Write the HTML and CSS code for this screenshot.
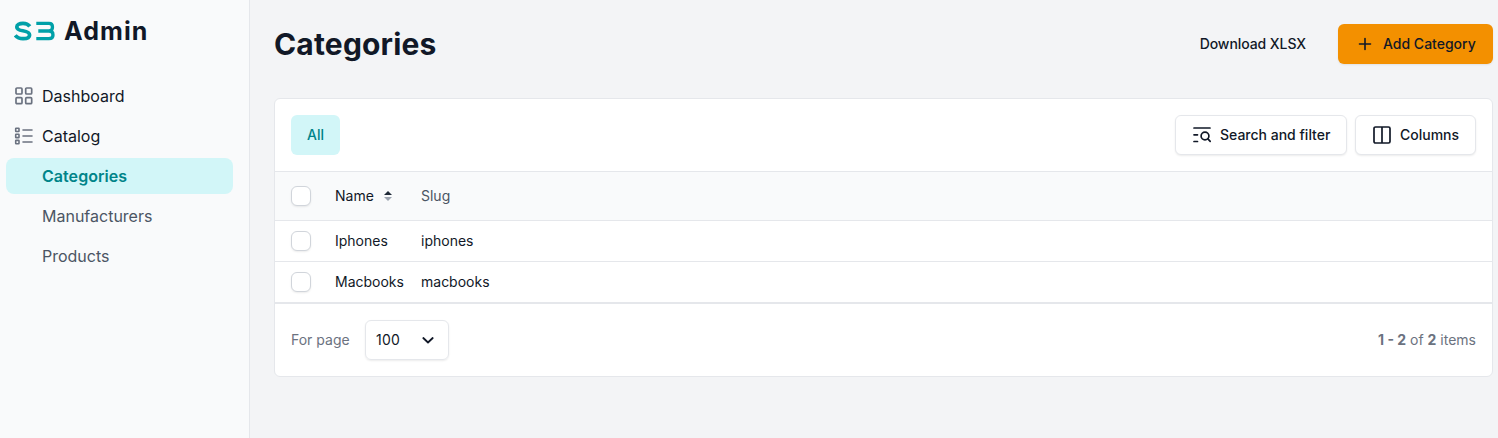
FILE: index.html
```html
<!DOCTYPE html>
<html lang="en">
<head>
<meta charset="utf-8">
<title>Categories</title>
<link rel="stylesheet" href="styles.css">
</head>
<body>
<div class="app">
  <aside class="sidebar">
    <div class="brand">
      <svg class="brand-mark" width="42" height="20" viewBox="0 0 42 20" fill="none" stroke="currentColor" stroke-width="3.700">
        <path d="M15.800 5.400C14.300 3.300 12.300 2.300 9 2.300 5.300 2.300 2.800 3.600 2.800 5.900c0 2.300 2.100 3.200 6.100 3.900 4.500.8 6.700 1.700 6.700 4.100 0 2.500-2.600 3.800-6.600 3.800-3.600 0-6.200-1.200-7.800-3.300"/>
        <path d="M22.300 2.300H35Q38.500 2.300 38.500 6Q38.500 10 35 10H24.300M35 10Q39 10 39 13.900Q39 17.700 35 17.700H22.300" stroke-width="3.300"/>
      </svg>
      <span class="brand-name">Admin</span>
    </div>
    <nav class="nav">
      <a class="nav-item">
        <svg class="nav-icon" width="20" height="20" viewBox="0 0 20 20" fill="none" stroke="currentColor" stroke-width="1.700"><rect x="2" y="2" width="6" height="6" rx="1"/><rect x="11.700" y="2" width="6" height="6" rx="1"/><rect x="2" y="11.700" width="6" height="6" rx="1"/><rect x="11.700" y="11.700" width="6" height="6" rx="1"/></svg>
        Dashboard
      </a>
      <a class="nav-item">
        <svg class="nav-icon" width="20" height="20" viewBox="0 0 20 20" fill="none" stroke="currentColor" stroke-width="1.600" stroke-linecap="round"><rect x="1.700" y="2.200" width="3.300" height="3.300" rx=".4"/><rect x="1.700" y="8.300" width="3.300" height="3.300" rx=".4"/><rect x="1.700" y="14.400" width="3.300" height="3.300" rx=".4"/><path d="M9 4h9M9 10h9M9 16h9"/></svg>
        Catalog
      </a>
      <a class="nav-item nav-child active">Categories</a>
      <a class="nav-item nav-child">Manufacturers</a>
      <a class="nav-item nav-child">Products</a>
    </nav>
  </aside>
  <main class="main">
    <header class="page-header">
      <h1 class="title">Categories</h1>
      <div class="actions">
        <a class="link-btn">Download XLSX</a>
        <button class="btn btn-primary"><svg width="20" height="20" viewBox="0 0 20 20" fill="none" stroke="currentColor" stroke-width="1.600" stroke-linecap="round"><path d="M10 4.500v11M4.500 10h11"/></svg>Add Category</button>
      </div>
    </header>
    <section class="card">
      <div class="toolbar">
        <button class="tab">All</button>
        <div class="tools">
          <button class="btn btn-filter"><svg width="20" height="20" viewBox="0 0 20 20" fill="none" stroke="currentColor" stroke-width="1.700" stroke-linecap="round"><path d="M2 3h16M2 9.800h3.500M2 16.500h3.500"/><circle cx="13" cy="11" r="3.900"/><path d="M15.900 13.900L18.200 16.300"/></svg>Search and filter</button>
          <button class="btn btn-columns"><svg width="20" height="20" viewBox="0 0 20 20" fill="none" stroke="currentColor" stroke-width="1.700"><rect x="2" y="2" width="16" height="16" rx="1.500"/><path d="M10 2v16"/></svg>Columns</button>
        </div>
      </div>
      <div class="row head">
        <span class="check"></span>
        <span class="cell name">Name<svg class="sort" width="8" height="10" viewBox="0 0 8 10"><path class="sort-up" d="M0 4L4 0l4 4z"/><path class="sort-down" d="M0 6l4 4 4-4z"/></svg></span>
        <span class="cell muted">Slug</span>
      </div>
      <div class="row"><span class="check"></span><span class="cell name">Iphones</span><span class="cell">iphones</span></div>
      <div class="row last"><span class="check"></span><span class="cell name">Macbooks</span><span class="cell">macbooks</span></div>
      <footer class="footer">
        <span class="per-page">For page</span>
        <div class="select"><span class="per-page-value">100</span><svg width="20" height="20" viewBox="0 0 20 20" fill="none" stroke="currentColor" stroke-width="1.800" stroke-linecap="round" stroke-linejoin="round"><path d="M5.300 8l4.700 4.500L14.700 8"/></svg></div>
        <span class="count"><b>1 - 2</b> of <b>2</b> items</span>
      </footer>
    </section>
  </main>
</div>
</body>
</html>
```
FILE: styles.css
```css
* { box-sizing: border-box; }
body { margin: 0; font-family: Inter, sans-serif; font-size: 14px; line-height: 20px; color: #111827; background: #f3f4f6; }
button { font: inherit; color: inherit; border: 0; margin: 0; }
svg { flex: none; display: block; }
.app { display: flex; height: 438px; overflow: hidden; }
.sidebar { width: 250px; flex: none; background: #f9fafb; border-right: 1px solid #e5e7eb; }
.brand { display: flex; align-items: center; gap: 8px; height: 60px; padding: 1px 0 0 14px; }
.brand-mark { color: #00a0a8; }
.brand-name { font-size: 25px; line-height: 32px; font-weight: 700; letter-spacing: 1.1px; }
.nav { display: flex; flex-direction: column; gap: 4px; padding: 18px 16px 0 6px; }
.nav-item { display: flex; align-items: center; gap: 8px; height: 36px; padding-left: 8px; border-radius: 8px; font-size: 16px; line-height: 24px; }
.nav-icon { color: #6b7280; }
.nav-child { padding-left: 36px; color: #4b5563; }
.active { background: #d2f6f8; color: #008489; font-weight: 600; letter-spacing: 0.05px; }
.main { flex: 1; padding: 24px 5px 0 24px; }
.page-header { display: flex; align-items: center; justify-content: space-between; height: 40px; }
.title { margin: 0; font-size: 30px; line-height: 36px; font-weight: 700; letter-spacing: 0.18px; }
.actions { display: flex; align-items: center; gap: 32px; font-weight: 500; }
.link-btn { letter-spacing: -0.07px; }
.btn { display: flex; align-items: center; height: 41px; border: 1px solid #e5e7eb; border-radius: 6px; background: #fff; font-weight: 500; box-shadow: 0 1px 2px rgba(0,0,0,.08); white-space: nowrap; }
.btn-primary { width: 155px; height: 40px; padding: 0 0 0 17px; gap: 8px; border: 0; background: #f39000; }
.card { margin-top: 34px; height: 279px; background: #fff; border: 1px solid #e5e7eb; border-radius: 6px; overflow: hidden; }
.toolbar { display: flex; align-items: center; justify-content: space-between; height: 73px; padding: 0 16px; border-bottom: 1px solid #e5e7eb; }
.tab { width: 49px; height: 40px; padding: 0; border-radius: 6px; background: #d2f6f8; color: #008489; font-weight: 500; }
.tools { display: flex; gap: 8px; }
.btn-filter, .btn-columns { height: 40px; padding: 0 0 0 16px; gap: 8px; }
.btn-filter { width: 172px; }
.btn-columns { width: 121px; }
.row { display: grid; grid-template-columns: 44px 86px 1fr; align-items: center; height: 41px; padding-left: 16px; border-bottom: 1px solid #e5e7eb; }
.head { height: 49px; background: #f9fafb; }
.last { height: 42px; border-bottom-width: 2px; }
.check { width: 20px; height: 20px; border: 1px solid #d1d5db; border-radius: 6px; background: #fff; box-shadow: 0 1px 2px rgba(0,0,0,.08); }
.cell { display: flex; align-items: center; gap: 10px; }
.sort-up { fill: #1f2937; }
.sort-down { fill: #9ca3af; }
.muted { color: #4b5563; }
.footer { display: flex; align-items: center; height: 72px; padding: 0 16px; color: #6b7280; }
.per-page { width: 58px; white-space: nowrap; }
.select { display: flex; align-items: center; justify-content: space-between; width: 84px; height: 40px; margin-left: 16px; padding: 0 10px 0 10px; border: 1px solid #e5e7eb; border-radius: 6px; color: #111827; box-shadow: 0 1px 2px rgba(0,0,0,.08); }
.per-page-value { letter-spacing: 0.2px; }
.count { margin-left: auto; }
.count b { font-weight: 700; }
```
